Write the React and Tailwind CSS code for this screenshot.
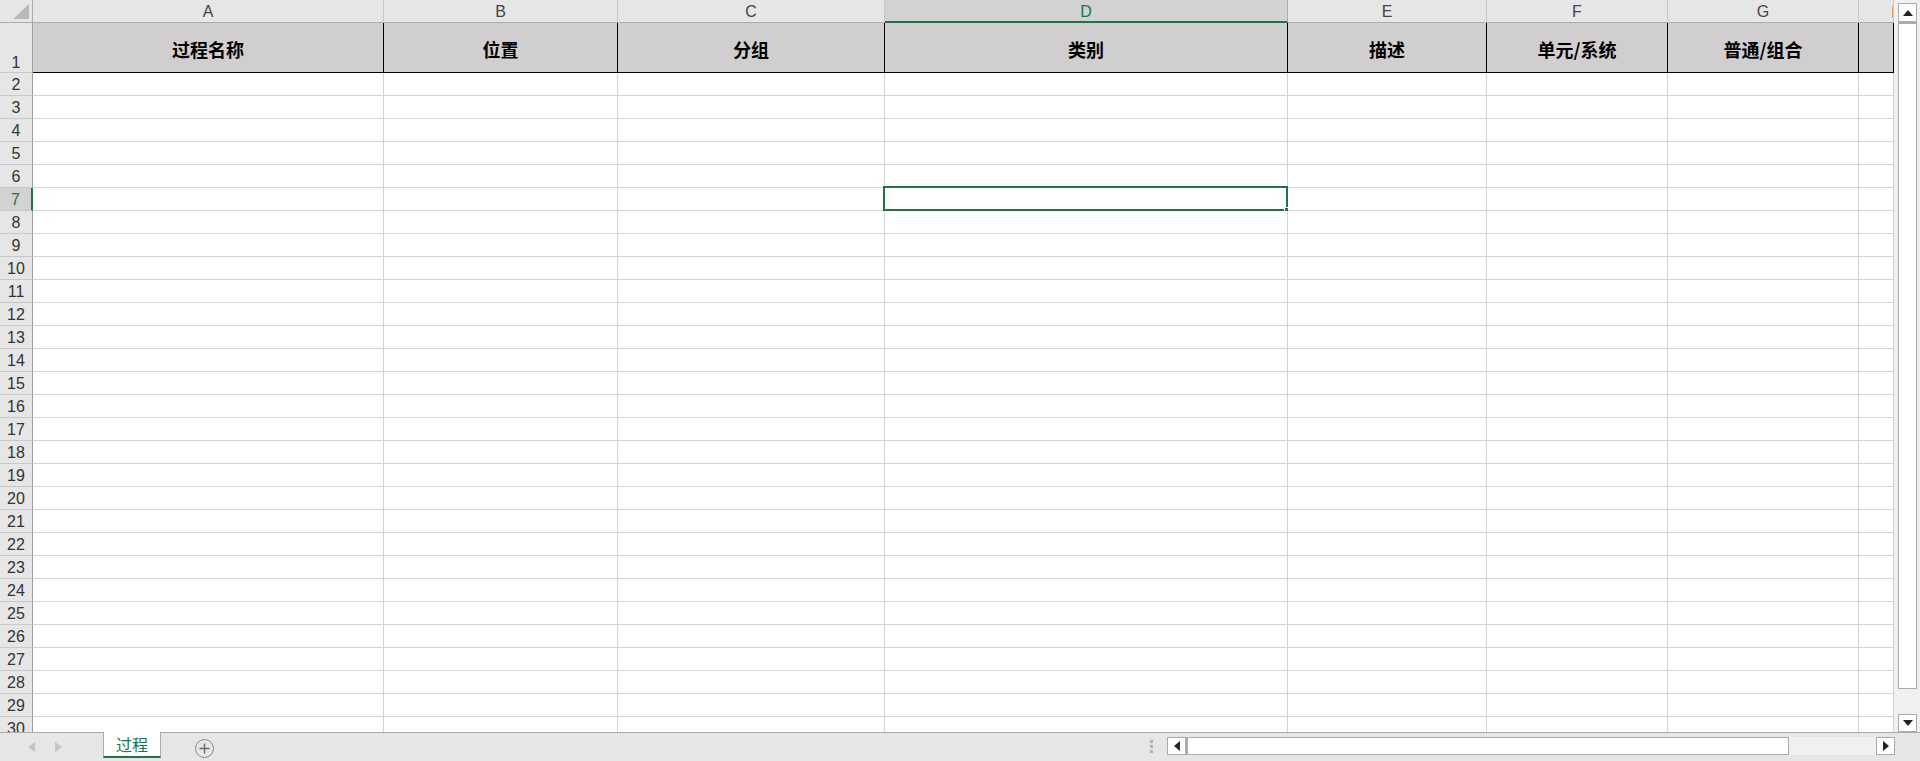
import React from "react";

const GRID = "grid grid-cols-[33px_351px_234px_267px_403px_199px_181px_191px_1fr]";

const COLUMNS = [
  { letter: "A", title: "过程名称" },
  { letter: "B", title: "位置" },
  { letter: "C", title: "分组" },
  { letter: "D", title: "类别", active: true },
  { letter: "E", title: "描述" },
  { letter: "F", title: "单元/系统" },
  { letter: "G", title: "普通/组合" },
  { letter: "H", title: "" },
];

const UI_FONT = "font-['Liberation_Sans','Noto_Sans_CJK_SC',sans-serif]";
const CJK_FONT = "font-['Noto_Sans_CJK_SC',sans-serif]";

const bodyRows = Array.from({ length: 29 }, (_, i) => i + 2);

const ColumnHeaders = () => (
  <div className={`${GRID} h-[23px] bg-[#e6e6e6]`}>
    <div className="relative border-r border-b border-[#ababab] bg-[#e6e6e6]">
      <svg className="absolute right-[3px] bottom-[3px]" width="16" height="15" viewBox="0 0 16 15">
        <path d="M16 0 L16 15 L0 15 Z" fill="#b9b9b9" />
      </svg>
    </div>
    {COLUMNS.map((c) =>
      c.active ? (
        <div
          key={c.letter}
          className="flex items-center justify-center pt-[2px] bg-[#d2d2d2] border-r border-[#ababab] border-b-2 border-b-[#217346] text-[16px] leading-none text-[#217346]"
        >
          {c.letter}
        </div>
      ) : (
        <div
          key={c.letter}
          className="relative flex items-center justify-center pt-[2px] border-r border-r-[#c8c8c8] border-b border-b-[#ababab] text-[16px] leading-none text-[#444]"
        >
          {c.letter === "H" ? (
            <span className="absolute right-0 top-[6px] w-[1px] h-[12px] bg-[#e8a06a]" />
          ) : (
            c.letter
          )}
        </div>
      )
    )}
  </div>
);

const TitleRow = () => (
  <div className={`${GRID} h-[50px]`}>
    <div className="flex items-end justify-center pb-0 bg-[#e6e6e6] border-r border-[#9f9f9f] border-b border-b-[#c8c8c8] text-[16px] leading-[18px] text-[#333]">
      1
    </div>
    {COLUMNS.map((c) => (
      <div
        key={c.letter}
        className={`flex items-center justify-center pt-[4px] bg-[#d0cece] border-r border-b border-black text-[18px] font-bold text-black ${CJK_FONT}`}
      >
        {c.title}
      </div>
    ))}
  </div>
);

const BodyRow = ({ n }) => {
  const active = n === 7;
  return (
    <div className={`${GRID} h-[23px]`}>
      <div
        className={
          active
            ? "flex items-center justify-center pt-[2px] bg-[#d2d2d2] border-r-2 border-r-[#217346] border-b border-b-[#c8c8c8] text-[16px] leading-none text-[#217346]"
            : "flex items-center justify-center pt-[2px] bg-[#e6e6e6] border-r border-r-[#9f9f9f] border-b border-b-[#c8c8c8] text-[16px] leading-none text-[#333]"
        }
      >
        {n}
      </div>
      {COLUMNS.map((c) => (
        <div key={c.letter} className="relative bg-white border-r border-b border-[#d4d4d4]">
          {active && c.active && (
            <>
              <div className="absolute left-[-2px] top-[-2px] right-[-1px] bottom-[-1px] border-2 border-[#217346]" />
              <div className="absolute right-[-4px] bottom-[-4px] w-[7px] h-[7px] bg-[#217346] border border-white" />
            </>
          )}
        </div>
      ))}
    </div>
  );
};

const ArrowBtn = ({ dir }) => (
  <div className="w-[19px] h-[18px] bg-white border border-[#ababab] flex items-center justify-center">
    <svg width="6" height="10" viewBox="0 0 6 10">
      {dir === "left" && <path d="M6 0 L6 10 L0 5 Z" fill="#222" />}
      {dir === "right" && <path d="M0 0 L0 10 L6 5 Z" fill="#222" />}
    </svg>
  </div>
);

const VScroll = () => (
  <div className="w-[26px] shrink-0 bg-[#f0f0f0] flex flex-col pl-[4px] pr-[3px]">
    <div className="mt-[3px] w-[19px] h-[19px] bg-white border border-[#ababab] flex items-center justify-center">
      <svg width="10" height="6" viewBox="0 0 10 6">
        <path d="M0 6 L10 6 L5 0 Z" fill="#222" />
      </svg>
    </div>
    <div className="w-[19px] h-[667px] bg-white border border-[#ababab] border-t-2" />
    <div className="flex-1" />
    <div className="w-[19px] h-[18px] bg-white border border-[#ababab] flex items-center justify-center">
      <svg width="10" height="6" viewBox="0 0 10 6">
        <path d="M0 0 L10 0 L5 6 Z" fill="#222" />
      </svg>
    </div>
  </div>
);

const BottomBar = () => (
  <div className={`h-[29px] shrink-0 bg-[#e6e6e6] border-t border-[#ababab] flex items-start ${UI_FONT}`}>
    <div className="w-[103px] h-[28px] flex items-center pl-[28px] gap-[20px]">
      <svg width="7" height="10" viewBox="0 0 7 10">
        <path d="M7 0 L7 10 L0 5 Z" fill="#c4c4c4" />
      </svg>
      <svg width="7" height="10" viewBox="0 0 7 10">
        <path d="M0 0 L0 10 L7 5 Z" fill="#c4c4c4" />
      </svg>
    </div>
    <div className="-mt-px w-[58px] h-[26px] bg-white border-x border-[#ababab] border-b-2 border-b-[#217346] flex items-center justify-center">
      <span className={`text-[16px] leading-none text-[#217346] ${CJK_FONT}`}>过程</span>
    </div>
    <div className="ml-[34px] mt-[6px] w-[19px] h-[19px] rounded-full border border-[#8a8a8a] flex items-center justify-center">
      <svg width="11" height="11" viewBox="0 0 11 11">
        <path d="M5.5 0.5 V10.5 M0.5 5.5 H10.5" stroke="#6a6a6a" strokeWidth="1.4" />
      </svg>
    </div>
    <div className="flex-1" />
    <div className="mt-[7px] flex flex-col gap-[2px] w-[3px]">
      <span className="w-[3px] h-[3px] bg-[#b0b0b0]" />
      <span className="w-[3px] h-[3px] bg-[#b0b0b0]" />
      <span className="w-[3px] h-[3px] bg-[#b0b0b0]" />
    </div>
    <div className="ml-[14px] mt-[4px] w-[728px] h-[19px] flex">
      <ArrowBtn dir="left" />
      <div className="w-[603px] h-[18px] bg-white border border-[#ababab] border-l-2" />
      <div className="flex-1 h-[18px] bg-[#f0f0f0]" />
      <ArrowBtn dir="right" />
    </div>
    <div className="w-[25px]" />
  </div>
);

export default function App() {
  return (
    <div className={`w-[1920px] h-[761px] flex flex-col overflow-hidden bg-white ${UI_FONT}`}>
      <div className="flex-1 min-h-0 flex overflow-hidden">
        <div className="flex-1 min-w-0 overflow-hidden">
          <ColumnHeaders />
          <TitleRow />
          {bodyRows.map((n) => (
            <BodyRow key={n} n={n} />
          ))}
        </div>
        <VScroll />
      </div>
      <BottomBar />
    </div>
  );
}
